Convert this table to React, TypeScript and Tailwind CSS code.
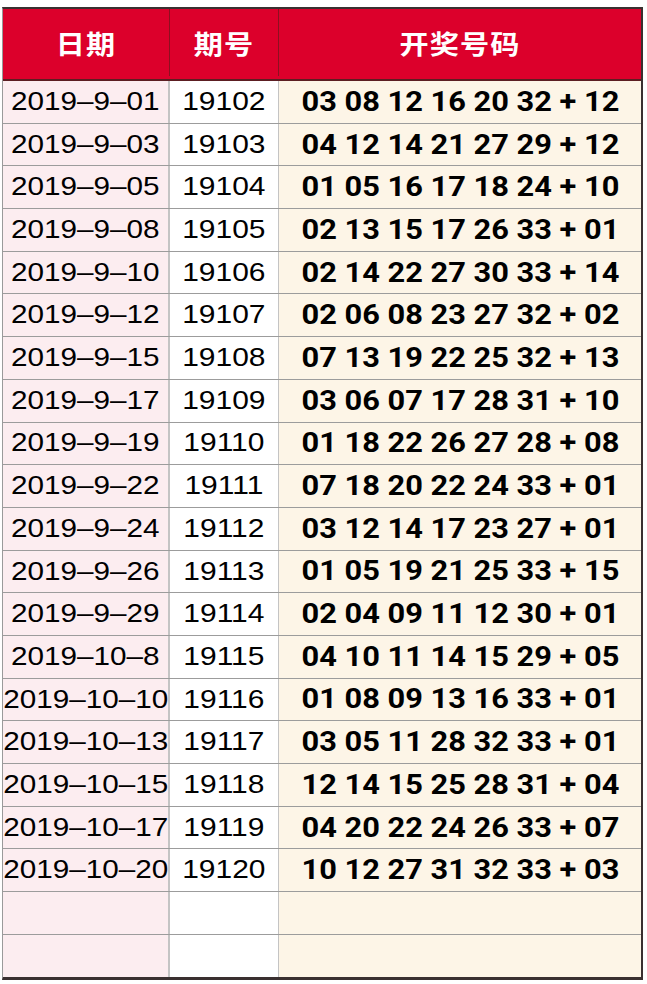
const draws: [string, string, string][] = [
  ["2019–9–01", "19102", "03 08 12 16 20 32 + 12"],
  ["2019–9–03", "19103", "04 12 14 21 27 29 + 12"],
  ["2019–9–05", "19104", "01 05 16 17 18 24 + 10"],
  ["2019–9–08", "19105", "02 13 15 17 26 33 + 01"],
  ["2019–9–10", "19106", "02 14 22 27 30 33 + 14"],
  ["2019–9–12", "19107", "02 06 08 23 27 32 + 02"],
  ["2019–9–15", "19108", "07 13 19 22 25 32 + 13"],
  ["2019–9–17", "19109", "03 06 07 17 28 31 + 10"],
  ["2019–9–19", "19110", "01 18 22 26 27 28 + 08"],
  ["2019–9–22", "19111", "07 18 20 22 24 33 + 01"],
  ["2019–9–24", "19112", "03 12 14 17 23 27 + 01"],
  ["2019–9–26", "19113", "01 05 19 21 25 33 + 15"],
  ["2019–9–29", "19114", "02 04 09 11 12 30 + 01"],
  ["2019–10–8", "19115", "04 10 11 14 15 29 + 05"],
  ["2019–10–10", "19116", "01 08 09 13 16 33 + 01"],
  ["2019–10–13", "19117", "03 05 11 28 32 33 + 01"],
  ["2019–10–15", "19118", "12 14 15 25 28 31 + 04"],
  ["2019–10–17", "19119", "04 20 22 24 26 33 + 07"],
  ["2019–10–20", "19120", "10 12 27 31 32 33 + 03"],
  ["", "", ""],
  ["", "", ""],
];

const sans = { fontFamily: '"Liberation Sans", Arial, sans-serif' };

export default function App() {
  return (
    <div className="bg-white min-h-screen pt-[7px] pl-[2px]">
      <div className="w-[641px] border-t-2 border-r-2 border-b-[3px] border-[#3a3030] border-l border-l-[#9a9a9a]">
        {/* Header */}
        <div
          className="flex h-[72px] pb-[3px] bg-[#dc002b] border-b-2 border-[#5c1e22] text-white font-bold text-[26px] tracking-[1px]"
          style={{ fontFamily: '"Noto Sans CJK SC", sans-serif' }}
        >
          <div className="w-[167px] flex items-center justify-center border-r border-[#8c1020]">
            <span className="inline-block scale-x-[1.12]">日期</span>
          </div>
          <div className="w-[109px] flex items-center justify-center border-r border-[#8c1020]">
            <span className="inline-block scale-x-[1.12]">期号</span>
          </div>
          <div className="flex-1 flex items-center justify-center">
            <span className="inline-block scale-x-[1.12]">开奖号码</span>
          </div>
        </div>

        {/* Rows */}
        {draws.map(([date, issue, nums], i) => (
          <div
            key={i}
            className={
              "flex h-[42.7px] text-black " +
              (i < draws.length - 1 ? "border-b border-[#9c9c9c]" : "")
            }
          >
            <div
              className="w-[167px] bg-[#fcedf0] flex items-center justify-center border-r-2 border-[#c4c4c4] text-[26.5px] whitespace-nowrap"
              style={sans}
            >
              <span className="inline-block scale-x-[1.12]">{date}</span>
            </div>
            <div
              className="w-[109px] bg-white flex items-center justify-center border-r border-[#c4c4c4] text-[26.5px]"
              style={sans}
            >
              <span className="inline-block scale-x-[1.13]">{issue}</span>
            </div>
            <div
              className="flex-1 bg-[#fdf5e7] flex items-center justify-center font-bold text-[28px] whitespace-nowrap"
              style={{ fontFamily: "Roboto, sans-serif" }}
            >
              <span className="inline-block scale-x-[1.1]">{nums}</span>
            </div>
          </div>
        ))}
      </div>
    </div>
  );
}
